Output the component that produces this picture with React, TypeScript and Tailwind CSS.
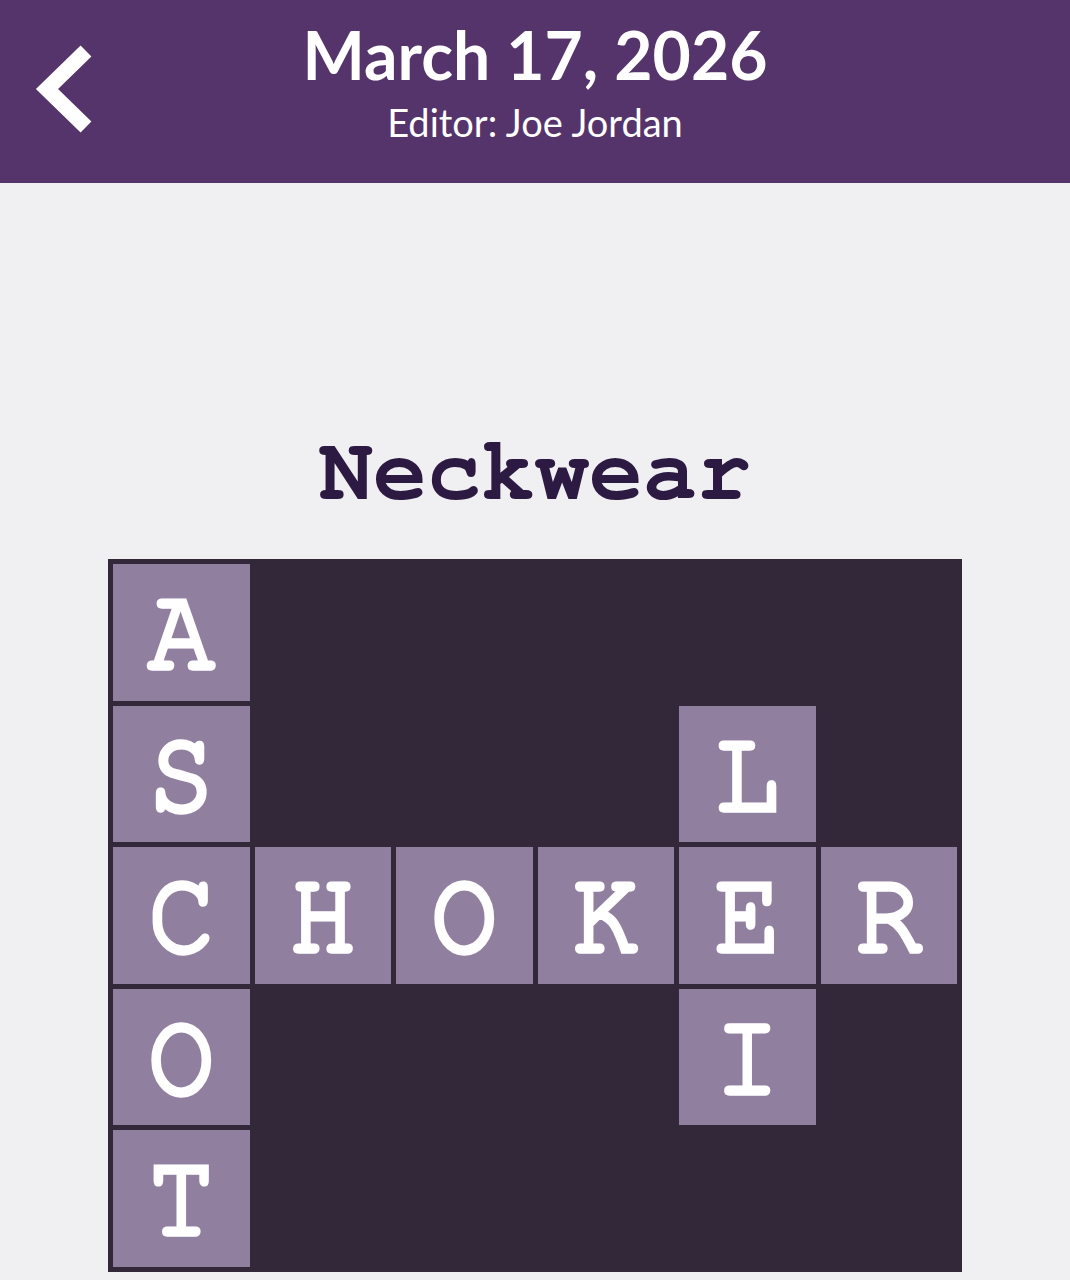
import React from "react";

const ROWS: string[] = [
  "A.....",
  "S...L.",
  "CHOKER",
  "O...I.",
  "T.....",
];

const MONO =
  "'Nimbus Mono PS', 'Nimbus Mono L', 'Courier 10 Pitch', FreeMono, 'Courier New', 'Liberation Mono', monospace";

function BackChevron() {
  return (
    <svg width="70" height="100" viewBox="0 0 70 100" className="block">
      <polyline
        points="57,9 18,47 57,85"
        fill="none"
        stroke="#ffffff"
        strokeWidth="15.5"
        strokeLinecap="butt"
        strokeLinejoin="miter"
      />
    </svg>
  );
}

export default function App() {
  return (
    <div className="min-h-[1280px] w-full bg-[#f0f0f3]">
      <header className="grid h-[183px] grid-cols-[130px_1fr_130px] items-center bg-[#55336b]">
        <button className="flex h-full items-center pl-[29px]" aria-label="Back">
          <BackChevron />
        </button>
        <div
          className="flex flex-col items-center text-white"
          style={{ fontFamily: "Lato, 'Noto Sans', sans-serif" }}
        >
          <h1 className="mt-[-20px] text-[66px] font-bold leading-none">March 17, 2026</h1>
          <p className="mt-[15px] text-[38px] leading-none">Editor: Joe Jordan</p>
        </div>
        <div />
      </header>

      <main className="flex flex-col items-center">
        <h2
          className="mt-[244px] text-[90px] font-bold leading-none text-[#2d1a42]"
          style={{ fontFamily: MONO }}
        >
          Neckwear
        </h2>

        <div className="mt-[42px] grid w-[854px] grid-cols-6 gap-[5px] bg-[#322839] p-[5px]">
          {ROWS.flatMap((row, r) =>
            row.split("").map((ch, c) =>
              ch === "." ? (
                <div key={`${r}-${c}`} className="aspect-square" />
              ) : (
                <div
                  key={`${r}-${c}`}
                  className="flex aspect-square items-center justify-center bg-[#917f9f]"
                >
                  <span
                    className="block scale-y-[1.08] text-[110px] font-normal leading-none text-white [-webkit-text-stroke:5px_#ffffff]"
                    style={{ fontFamily: MONO }}
                  >
                    {ch}
                  </span>
                </div>
              )
            )
          )}
        </div>
      </main>
    </div>
  );
}
